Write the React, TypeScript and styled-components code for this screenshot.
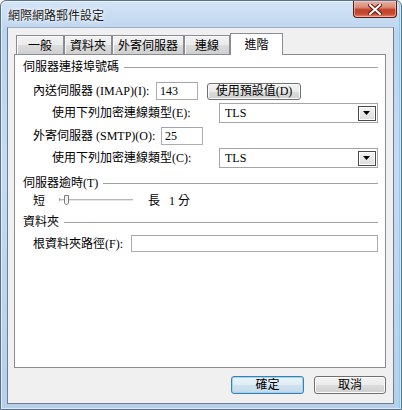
import React from "react";
import styled, { createGlobalStyle } from "styled-components";

const GlobalStyle = createGlobalStyle`
  html, body { margin: 0; padding: 0; background: #ffffff; }
  body {
    font-family: "Liberation Serif", "Noto Sans CJK TC", serif;
    font-size: 12px;
    color: #000;
  }
  * { box-sizing: border-box; }
`;

const Window = styled.div`
  width: 402px;
  height: 410px;
  border: 1px solid #5b7189;
  border-radius: 6px 6px 0 0;
  background: linear-gradient(180deg, #d3e4f6 0%, #bcd4ee 8%, #c6dbf1 40%, #b7cfea 100%);
  display: flex;
  flex-direction: column;
  padding: 0 7px 5px 6px;
  box-shadow: inset 0 0 0 1px rgba(255, 255, 255, 0.55), inset -2px 0 0 #7fd3f2;
`;

const TitleBar = styled.div`
  height: 26px;
  display: flex;
  justify-content: space-between;
  align-items: flex-start;
`;

const TitleText = styled.div`
  font-family: "Noto Sans CJK TC", sans-serif;
  font-size: 12px;
  line-height: 14px;
  margin-top: 7px;
  margin-left: 1px;
  color: #1a1a1a;
  text-shadow: 0 0 6px #ffffff, 0 0 3px #ffffff;
`;

const CloseButton = styled.div`
  width: 44px;
  height: 17px;
  margin-right: -3px;
  border: 1px solid #5e1a12;
  border-top: none;
  border-radius: 0 0 4px 4px;
  background: linear-gradient(180deg, #e8b2a3 0%, #d98a75 40%, #c2412a 55%, #c84a30 80%, #e08a6c 100%);
  box-shadow: inset 0 0 0 1px rgba(255, 220, 210, 0.5);
  display: flex;
  align-items: center;
  justify-content: center;
`;

const Client = styled.div`
  flex: 1;
  display: flex;
  flex-direction: column;
  background: #f0f0f0;
  border: 1px solid #6f7f92;
  border-top-color: #9db0c5;
  padding: 5px 7px 8px 6px;
`;

const TabStrip = styled.div`
  height: 21px;
  display: flex;
  align-items: flex-end;
  padding-left: 2px;
  position: relative;
  z-index: 1;
`;

const Tab = styled.div<{ $w: number; $active?: boolean }>`
  width: ${(p) => p.$w}px;
  height: ${(p) => (p.$active ? 22 : 19)}px;
  margin-bottom: ${(p) => (p.$active ? -1 : 0)}px;
  border: 1px solid #898c95;
  border-bottom: none;
  background: ${(p) =>
    p.$active
      ? "#ffffff"
      : "linear-gradient(180deg, #f2f2f2 0%, #ebebeb 50%, #dddddd 50%, #cfcfcf 100%)"};
  font-family: "Noto Sans CJK TC", sans-serif;
  font-size: 12px;
  line-height: 14px;
  display: flex;
  justify-content: center;
  padding-top: ${(p) => (p.$active ? 3 : 2)}px;
  box-shadow: ${(p) => (p.$active ? "none" : "inset 1px 1px 0 #fbfbfb")};
`;

const Panel = styled.div`
  flex: 1;
  background: #ffffff;
  border: 1px solid #898c95;
  display: flex;
  flex-direction: column;
  padding: 5px 7px 0 8px;
`;

const GroupHeader = styled.div<{ $mt: number }>`
  height: 14px;
  margin-top: ${(p) => p.$mt}px;
  display: flex;
  align-items: center;
`;

const HeaderText = styled.span`
  line-height: 14px;
  white-space: nowrap;
`;

const HeaderLine = styled.div`
  flex: 1;
  height: 1px;
  margin-left: 5px;
  margin-top: 1px;
  background: #a0a0a0;
`;

const Row = styled.div<{ $mt: number; $h: number; $indent: number }>`
  height: ${(p) => p.$h}px;
  margin-top: ${(p) => p.$mt}px;
  padding-left: ${(p) => p.$indent}px;
  display: flex;
  align-items: center;
`;

const Label = styled.span<{ $w?: number }>`
  ${(p) => (p.$w ? `width: ${p.$w}px;` : "")}
  flex-shrink: 0;
  line-height: 14px;
  white-space: nowrap;
`;

const TextBox = styled.div<{ $w: number; $h: number }>`
  width: ${(p) => p.$w}px;
  height: ${(p) => p.$h}px;
  border: 1px solid #abadb3;
  border-top-color: #a2a5ad;
  background: #ffffff;
  padding-left: 3px;
  display: flex;
  align-items: center;
  line-height: 14px;
`;

const PushButton = styled.div<{ $w: number; $default?: boolean }>`
  width: ${(p) => p.$w}px;
  height: 18px;
  border: 1px solid ${(p) => (p.$default ? "#3c7fb1" : "#707070")};
  border-radius: 3px;
  background: ${(p) =>
    p.$default
      ? "linear-gradient(180deg, #eaf3f9 0%, #dfedf6 50%, #cfe2ef 50%, #c4d9e8 100%)"
      : "linear-gradient(180deg, #f2f2f2 0%, #ebebeb 50%, #dddddd 50%, #cfcfcf 100%)"};
  box-shadow: inset 0 0 0 1px ${(p) => (p.$default ? "#9fd3f2" : "#fcfcfc")};
  display: flex;
  align-items: center;
  justify-content: center;
  line-height: 14px;
  white-space: nowrap;
`;

const SideButton = styled(PushButton)`
  margin-left: 9px;
  margin-top: 1px;
  height: 17px;
`;

const Select = styled.div`
  width: 159px;
  height: 20px;
  border: 1px solid #a5a5a5;
  background: #ffffff;
  display: flex;
  align-items: center;
  justify-content: space-between;
  padding-left: 5px;
  padding-right: 1px;
  line-height: 14px;
`;

const DropArrow = styled.div`
  width: 18px;
  height: 15px;
  border: 1px solid #4a4a4a;
  background: linear-gradient(180deg, #f4f4f4 0%, #dcdcdc 100%);
  box-shadow: inset 0 0 0 1px #ffffff;
  display: flex;
  align-items: center;
  justify-content: center;
`;

const SliderTrack = styled.div`
  width: 76px;
  height: 16px;
  margin-left: 13px;
  margin-right: 14px;
  display: flex;
  align-items: center;
`;

const Gap = styled.span<{ $w: number }>`
  display: inline-block;
  width: ${(p) => p.$w}px;
`;

const ButtonBar = styled.div`
  height: 19px;
  margin-top: 8px;
  display: flex;
  justify-content: flex-end;
  gap: 10px;
`;

const Arrow = () => (
  <svg width="8" height="5" viewBox="0 0 8 5">
    <path d="M0 0 H7 L3.5 4 Z" fill="#000" />
  </svg>
);

const CloseGlyph = () => (
  <svg width="14" height="11" viewBox="0 0 14 11">
    <path d="M2 1 L12 10 M12 1 L2 10" stroke="#5a1a10" strokeWidth="4" strokeLinecap="square" />
    <path d="M2 1 L12 10 M12 1 L2 10" stroke="#ffffff" strokeWidth="2" strokeLinecap="square" />
  </svg>
);

const Trackbar = () => (
  <svg width="76" height="16" viewBox="0 0 76 16">
    <line x1="1" y1="6.5" x2="75" y2="6.5" stroke="#b8b8b8" strokeWidth="1" />
    <line x1="1" y1="7.5" x2="75" y2="7.5" stroke="#e6e6e6" strokeWidth="1" />
    <line x1="1.5" y1="5" x2="1.5" y2="8" stroke="#a0a0a0" strokeWidth="1" />
    <path d="M6.5 2.5 H10.5 V10 L8.5 12 L6.5 10 Z" fill="#f4f4f4" stroke="#7a7a7a" strokeWidth="1" />
  </svg>
);

export default function App() {
  return (
    <>
      <GlobalStyle />
      <Window>
        <TitleBar>
          <TitleText>網際網路郵件設定</TitleText>
          <CloseButton>
            <CloseGlyph />
          </CloseButton>
        </TitleBar>
        <Client>
          <TabStrip>
            <Tab $w={48}>一般</Tab>
            <Tab $w={48}>資料夾</Tab>
            <Tab $w={72}>外寄伺服器</Tab>
            <Tab $w={46}>連線</Tab>
            <Tab $w={53} $active>
              進階
            </Tab>
          </TabStrip>
          <Panel>
            <GroupHeader $mt={0}>
              <HeaderText>伺服器連接埠號碼</HeaderText>
              <HeaderLine />
            </GroupHeader>
            <Row $mt={7} $h={19} $indent={10}>
              <Label $w={123}>內送伺服器 (IMAP)(I):</Label>
              <TextBox $w={42} $h={18}>143</TextBox>
              <SideButton $w={94}>使用預設值(D)</SideButton>
            </Row>
            <Row $mt={3} $h={20} $indent={29}>
              <Label $w={167}>使用下列加密連線類型(E):</Label>
              <Select>
                TLS
                <DropArrow>
                  <Arrow />
                </DropArrow>
              </Select>
            </Row>
            <Row $mt={4} $h={18} $indent={10}>
              <Label $w={128}>外寄伺服器 (SMTP)(O):</Label>
              <TextBox $w={42} $h={18}>25</TextBox>
            </Row>
            <Row $mt={3} $h={20} $indent={29}>
              <Label $w={167}>使用下列加密連線類型(C):</Label>
              <Select>
                TLS
                <DropArrow>
                  <Arrow />
                </DropArrow>
              </Select>
            </Row>
            <GroupHeader $mt={8}>
              <HeaderText>伺服器逾時(T)</HeaderText>
              <HeaderLine />
            </GroupHeader>
            <Row $mt={3} $h={16} $indent={10}>
              <Label>短</Label>
              <SliderTrack>
                <Trackbar />
              </SliderTrack>
              <Label>長</Label>
              <Gap $w={9} />
              <Label>1 分</Label>
            </Row>
            <GroupHeader $mt={6}>
              <HeaderText>資料夾</HeaderText>
              <HeaderLine />
            </GroupHeader>
            <Row $mt={6} $h={17} $indent={10}>
              <Label $w={98}>根資料夾路徑(F):</Label>
              <TextBox $w={247} $h={17} />
            </Row>
          </Panel>
          <ButtonBar>
            <PushButton $w={73} $default>
              確定
            </PushButton>
            <PushButton $w={72}>取消</PushButton>
          </ButtonBar>
        </Client>
      </Window>
    </>
  );
}
